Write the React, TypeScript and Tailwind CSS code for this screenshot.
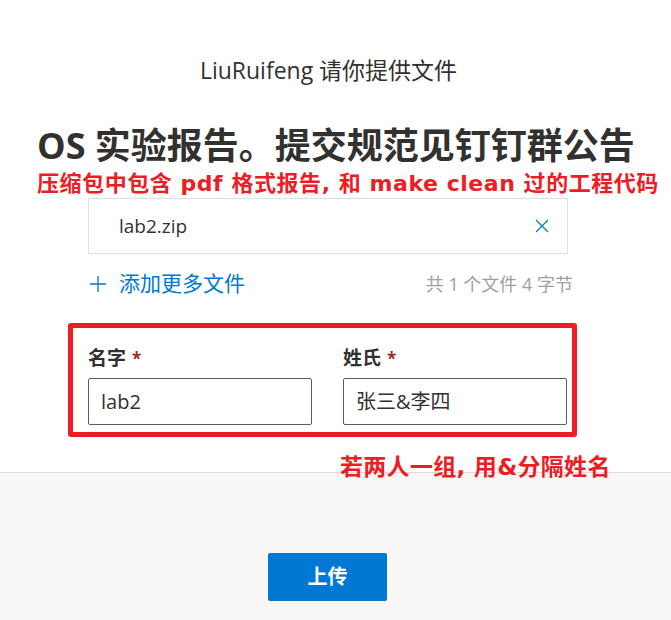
// App.tsx
// File request upload page: title block, selected file list, name fields
// wrapped by a red annotation frame, and a grey footer with the upload button.

const font = { fontFamily: '"Open Sans", "Noto Sans CJK SC", sans-serif' };
// red annotation text: wider Latin glyphs, like the screenshot's
const noteFont = { fontFamily: '"DejaVu Sans", "Noto Sans CJK SC", sans-serif' };

function CloseIcon() {
  return (
    <svg width="14" height="14" viewBox="0 0 14 14" fill="none" stroke="#0078d4" strokeWidth="1.2">
      <path d="M1 1 L13 13 M13 1 L1 13" />
    </svg>
  );
}

function PlusIcon() {
  return (
    <svg width="18" height="18" viewBox="0 0 18 18" fill="none" stroke="#0078d4" strokeWidth="1.3">
      <path d="M9 1 V17 M1 9 H17" />
    </svg>
  );
}

function Field({ label, value }: { label: string; value: string }) {
  return (
    <div className="flex w-[224px] flex-col">
      <div className="flex h-[40px] items-center text-[19px] font-bold leading-none text-[#323130]">
        {label}
        <span className="ml-[6px] text-[17px] text-[#a4262c]">*</span>
      </div>
      <div className="flex h-[47px] items-center rounded-[2px] border border-[#605e5c] px-[12px] text-[20px] text-[#323130]">
        {value}
      </div>
    </div>
  );
}

export default function App() {
  return (
    <div className="relative flex min-h-[620px] w-[671px] flex-col bg-white" style={font}>
      <div className="flex flex-col">
        <div className="mt-[54px] pr-[14px] text-center text-[23px] leading-[32px] text-[#323130]">
          LiuRuifeng 请你提供文件
        </div>

        <div className="mt-[38px] pl-[37px] text-[36px] font-bold leading-[44px] text-[#323130]">
          OS 实验报告。提交规范见钉钉群公告
        </div>

        <div
          className="mt-[1px] pl-[37px] text-[22px] font-bold leading-[30px] tracking-[0.55px] text-[#ee1c25]"
          style={noteFont}
        >
          压缩包中包含 pdf 格式报告, 和 make clean 过的工程代码
        </div>

        <div className="ml-[88px] mt-[-1px] flex h-[56px] w-[480px] items-center justify-between border border-[#e1dfdd] pl-[30px] pr-[18px] text-[19px] text-[#323130]">
          <span>lab2.zip</span>
          <CloseIcon />
        </div>

        <div className="ml-[89px] mt-[17px] flex h-[26px] w-[484px] items-center justify-between">
          <div className="flex items-center gap-[12px] text-[21px] text-[#0078d4]">
            <PlusIcon />
            <span>添加更多文件</span>
          </div>
          <span className="text-[18px] text-[#a19f9d]">共 1 个文件 4 字节</span>
        </div>

        <div className="ml-[68px] mt-[26px] flex h-[114px] w-[509px] gap-[31px] rounded-[3px] border-[5px] border-[#ee1c25] pl-[15px] pt-[10px]">
          <Field label="名字" value="lab2" />
          <Field label="姓氏" value="张三&李四" />
        </div>
      </div>

      <div className="mt-[35px] flex flex-1 justify-center border-t border-[#dedcda] bg-[#f8f7f6] pr-[16px] pt-[80px]">
        <button
          type="button"
          className="h-[48px] w-[119px] rounded-[2px] bg-[#0078d4] text-[20px] font-bold text-white"
        >
          上传
        </button>
      </div>

      <div
        className="absolute left-[340px] top-[451px] text-[23px] font-bold leading-[32px] tracking-[0.3px] text-[#ee1c25]"
        style={noteFont}
      >
        若两人一组, 用&amp;分隔姓名
      </div>
    </div>
  );
}
